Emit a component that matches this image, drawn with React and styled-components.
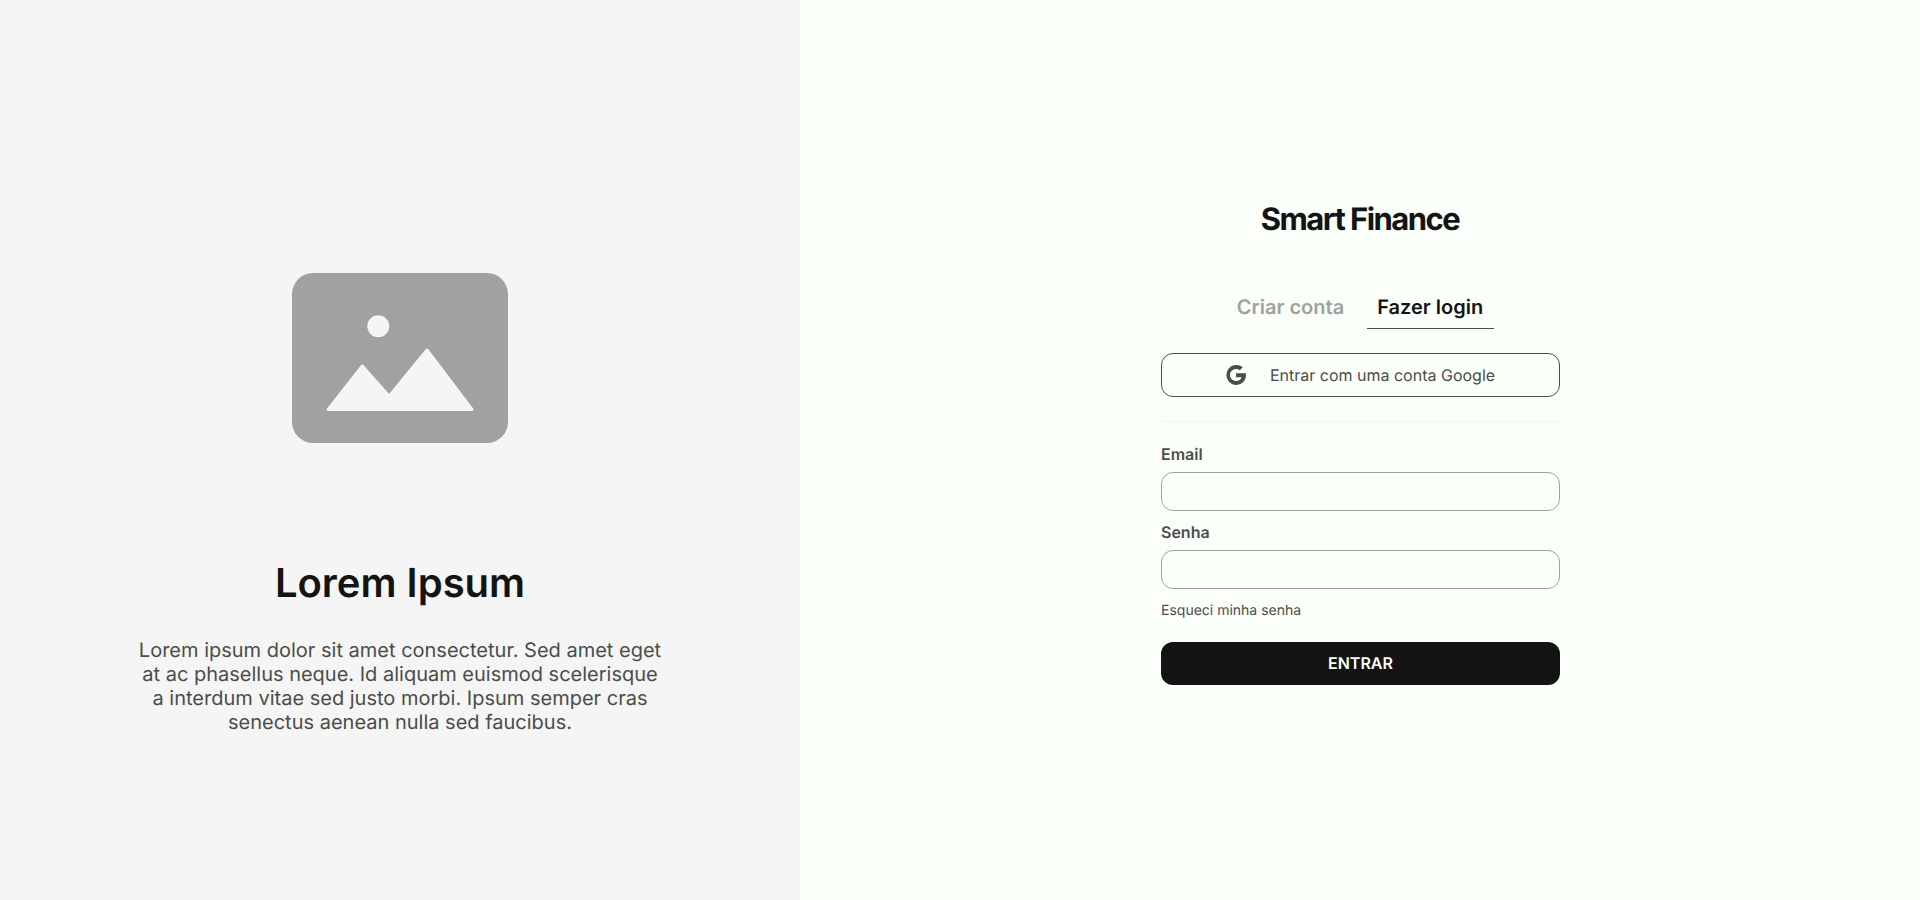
import React from "react";
import styled, { createGlobalStyle } from "styled-components";

const GlobalStyle = createGlobalStyle`
  * { box-sizing: border-box; margin: 0; padding: 0; }
  body {
    font-family: Inter, sans-serif;
    background: #fbfffa;
    color: #141414;
    text-rendering: geometricPrecision;
  }
  button, input { font-family: inherit; text-rendering: inherit; }
`;

const Page = styled.main`
  display: flex;
  height: 900px;
`;

const Intro = styled.section`
  width: 800px;
  background: #f5f5f5;
  display: flex;
  flex-direction: column;
  align-items: center;
  padding-top: 273px;
`;

const Illustration = styled.svg`
  display: block;
  width: 216px;
  height: 170px;
`;

const IntroTitle = styled.h1`
  margin-top: 116px;
  font-size: 40px;
  line-height: 48px;
  font-weight: 600;
`;

const IntroText = styled.p`
  margin-top: 31px;
  width: 526px;
  font-size: 20px;
  line-height: 24px;
  color: #4b4d4a;
  text-align: center;
`;

const Access = styled.section`
  flex: 1;
  display: flex;
  flex-direction: column;
  align-items: center;
  padding: 200px 0 0 1px;
`;

const Brand = styled.h2`
  margin-right: 1px;
  font-size: 31px;
  line-height: 39px;
  font-weight: 700;
  letter-spacing: -0.05em;
`;

const Tabs = styled.nav`
  display: flex;
  gap: 12px;
  margin-top: 56px;
`;

const Tab = styled.button`
  height: 34px;
  padding: 0 11px 9px 10px;
  border: 0;
  border-bottom: 1px solid ${(p) => (p.$active ? "#4b4d4a" : "transparent")};
  background: none;
  font-size: 20px;
  line-height: 24px;
  font-weight: 600;
  color: ${(p) => (p.$active ? "#141414" : "#a0a29f")};
`;

const Form = styled.form`
  width: 399px;
  margin-top: 24px;
  display: flex;
  flex-direction: column;
`;

const GoogleButton = styled.button`
  height: 44px;
  display: flex;
  align-items: center;
  justify-content: center;
  gap: 22px;
  padding-right: 2px;
  border: 1px solid #4b4d4a;
  border-radius: 12px;
  background: none;
  font-size: 16px;
  color: #4b4d4a;
`;

const Divider = styled.hr`
  border: 0;
  height: 1px;
  margin: 24px 0 23px;
  background: #f3f5f2;
`;

const Label = styled.label`
  font-size: 16px;
  line-height: 19px;
  font-weight: 600;
  color: #4b4d4a;
`;

const Field = styled.input`
  height: 39px;
  margin: 8px 0 12px;
  padding: 0 12px;
  border: 1px solid #a0a29f;
  border-radius: 12px;
  background: none;
  outline: none;
`;

const Forgot = styled.a`
  font-size: 14px;
  line-height: 19px;
  color: #4b4d4a;
`;

const Submit = styled.button`
  height: 43px;
  margin-top: 22px;
  padding-bottom: 1px;
  border: 0;
  border-radius: 12px;
  background: #141414;
  color: #fbfffa;
  font-size: 16px;
  font-weight: 600;
`;

const GoogleMark = () => (
  <svg width="24" height="24" viewBox="0 0 24 24" fill="#4b4d4a">
    <path d="M21.8 10.2H12v4h5.600c-.6 2.300-2.600 3.900-5.600 3.900A6.100 6.100 0 0 1 12 5.900c1.500 0 2.800.5 3.800 1.400l3-3A10 10 0 1 0 12 22c5 0 10-3.600 10-10 0-.6-.1-1.200-.2-1.800z" />
  </svg>
);

export default function App() {
  return (
    <>
      <GlobalStyle />
      <Page>
        <Intro>
          <Illustration viewBox="0 0 216 170">
            <rect width="216" height="170" rx="21" fill="#a0a29f" />
            <circle cx="86.300" cy="53.200" r="11" fill="#f5f5f5" />
            <path
              d="M36.200 136.500 70.300 93 97.200 123.300 135 77 180 136.500Z"
              fill="#f5f5f5"
              stroke="#f5f5f5"
              strokeWidth="3"
              strokeLinejoin="round"
            />
          </Illustration>
          <IntroTitle>Lorem Ipsum</IntroTitle>
          <IntroText>
            Lorem ipsum dolor sit amet consectetur. Sed amet eget at ac phasellus
            neque. Id aliquam euismod scelerisque a interdum vitae sed justo
            morbi. Ipsum semper cras senectus aenean nulla sed faucibus.
          </IntroText>
        </Intro>
        <Access>
          <Brand>Smart Finance</Brand>
          <Tabs>
            <Tab type="button">Criar conta</Tab>
            <Tab type="button" $active>Fazer login</Tab>
          </Tabs>
          <Form>
            <GoogleButton type="button">
              <GoogleMark />
              Entrar com uma conta Google
            </GoogleButton>
            <Divider />
            <Label htmlFor="email">Email</Label>
            <Field id="email" type="email" />
            <Label htmlFor="senha">Senha</Label>
            <Field id="senha" type="password" />
            <Forgot>Esqueci minha senha</Forgot>
            <Submit type="button">ENTRAR</Submit>
          </Form>
        </Access>
      </Page>
    </>
  );
}
